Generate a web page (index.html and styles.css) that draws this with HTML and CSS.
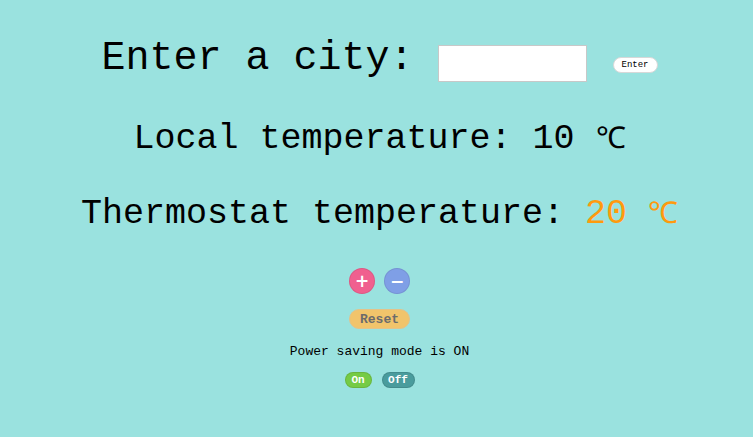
FILE: index.html
```html
<!DOCTYPE html>
<html>
<head>
<meta charset="utf-8">
<link rel="stylesheet" href="styles.css">
</head>
<body>
<main class="app">
  <div class="city-row">
    <span class="city-label">Enter a city:</span>
    <input class="city-input" type="text">
    <button class="enter-btn">Enter</button>
  </div>
  <div class="temp local">Local temperature: 10 <span class="deg">℃</span></div>
  <div class="temp thermo">Thermostat temperature: <span class="hot">20 <span class="deg">℃</span></span></div>
  <div class="adjust">
    <button class="round plus">+</button>
    <button class="round minus">−</button>
  </div>
  <button class="reset">Reset</button>
  <div class="mode">Power saving mode is ON</div>
  <div class="toggles">
    <button class="pill on">On</button>
    <button class="pill off">Off</button>
  </div>
</main>
</body>
</html>
```
FILE: styles.css
```css
html, body {
  margin: 0;
  padding: 0;
  background: #9ae2df;
  font-family: "Liberation Mono", "Courier New", monospace;
  color: #000;
}
.app {
  display: flex;
  flex-direction: column;
  align-items: center;
  padding-top: 36px;
  padding-left: 6px;
}
.city-row {
  display: flex;
  align-items: flex-start;
  height: 46px;
}
.city-label {
  font-size: 40px;
  line-height: 46px;
}
.city-input {
  box-sizing: border-box;
  width: 149px;
  height: 37px;
  margin-left: 24px;
  margin-top: 9px;
  border: 1px solid #c8c8c8;
  background: #fff;
  padding: 0;
}
.enter-btn {
  box-sizing: border-box;
  margin-left: 26px;
  margin-top: 21px;
  width: 45px;
  height: 16px;
  font-family: "Liberation Mono", monospace;
  font-size: 9px;
  padding: 0;
  border: 1px solid #d8d8d8;
  border-radius: 8px;
  background: #fff;
  color: #000;
}
.temp {
  font-size: 35px;
  line-height: 40px;
  height: 40px;
}
.deg {
  font-family: "DejaVu Sans Mono", monospace;
  font-size: 30px;
  line-height: 0;
}
.local {
  margin-top: 37px;
}
.thermo {
  margin-top: 35px;
}
.hot {
  color: #ff9a0e;
}
.adjust {
  display: flex;
  gap: 9px;
  margin-top: 34px;
}
.round {
  box-sizing: border-box;
  width: 26px;
  height: 26px;
  border-radius: 50%;
  border: 1px solid rgba(0,0,0,0.08);
  padding: 0;
  color: #fff;
  font-family: "DejaVu Sans", sans-serif;
  font-weight: bold;
  font-size: 17px;
  line-height: 22px;
}
.plus { background: #f0608f; }
.minus { background: #7f9fe6; }
.reset {
  box-sizing: border-box;
  margin-top: 15px;
  width: 61px;
  height: 20px;
  border-radius: 10px;
  border: 1px solid #e2c38a;
  background: #f1c46b;
  color: #6b6b6b;
  font-family: "Liberation Mono", monospace;
  font-weight: bold;
  font-size: 13px;
  padding: 0;
}
.mode {
  margin-top: 15px;
  font-size: 13px;
  line-height: 16px;
}
.toggles {
  display: flex;
  gap: 10px;
  margin-top: 12px;
}
.pill {
  box-sizing: border-box;
  height: 16px;
  border-radius: 8px;
  border: 1px solid rgba(0,0,0,0.1);
  color: #fff;
  font-family: "Liberation Mono", monospace;
  font-weight: bold;
  font-size: 11px;
  padding: 0;
}
.on { width: 27px; background: #75cb45; }
.off { width: 33px; background: #4a9c9d; }
```
